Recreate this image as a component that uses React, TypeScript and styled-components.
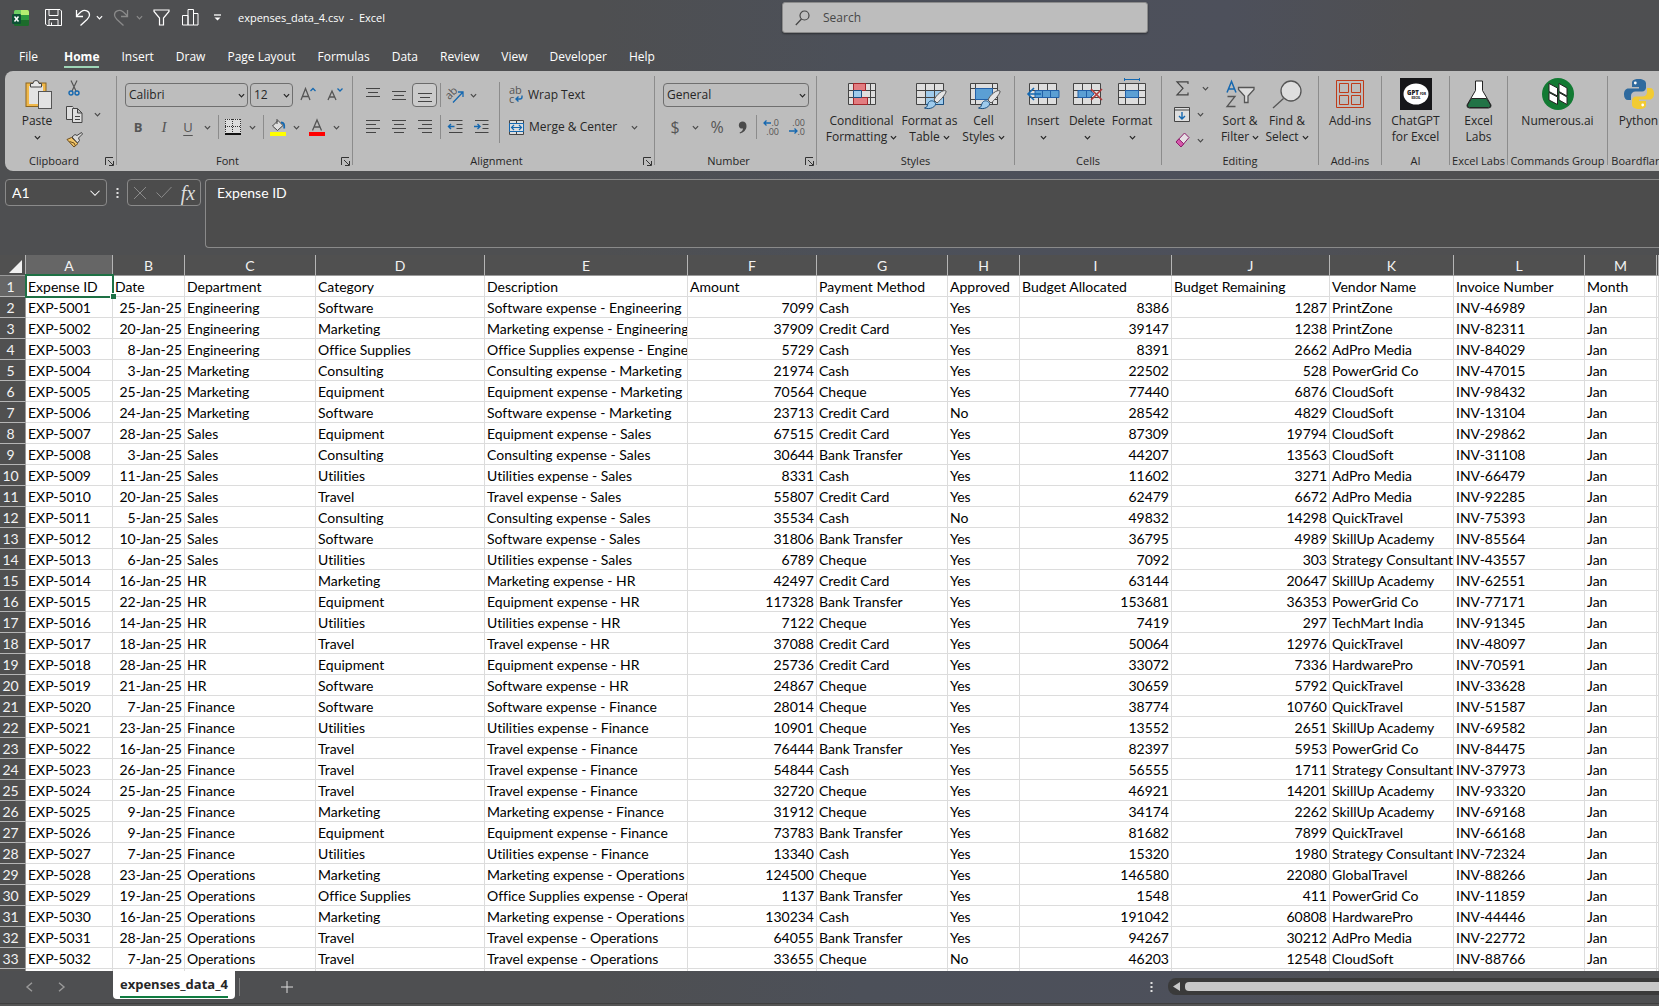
import React from "react";
import styled, { createGlobalStyle, css } from "styled-components";

const GlobalStyle = createGlobalStyle`
  *, *::before, *::after { box-sizing: border-box; }
  body { margin: 0; overflow: hidden; }
  button, input, select, textarea { font: inherit; color: inherit; }
  svg { display: block; flex: none; overflow: visible; }
`;

const ui = `"Open Sans", "Noto Sans", sans-serif`;
const sheet = `Lato, "Open Sans", sans-serif`;

/* ---------- shell ---------- */

const Shell = styled.div`
  display: flex;
  flex-direction: column;
  height: 100vh;
  overflow: hidden;
  font-family: ${ui};
  font-size: 12px;
  line-height: 16px;
  color: #fff;
  background: linear-gradient(90deg, #4e4f51 0%, #4e4f51 36%, #4c5059 52%, #4d505b 74%, #4f4f51 86%, #4e4f51 100%);
`;

const PlainButton = styled.button`
  display: flex;
  align-items: center;
  justify-content: center;
  padding: 0;
  border: 0;
  background: none;
`;

/* ---------- title bar ---------- */

const TitleBar = styled.header`
  display: grid;
  grid-template-columns: 782fr 366fr 511fr;
  align-items: start;
  height: 36px;
  padding-top: 2px;
`;

const QuickAccess = styled.div`
  display: flex;
  align-items: center;
  height: 31px;
  padding-left: 8px;
`;

const QuickButton = styled(PlainButton)<{ $w: number; $dim?: boolean }>`
  width: ${(p) => p.$w}px;
  height: 24px;
  color: ${(p) => (p.$dim ? "#8a8a8a" : "#fff")};
`;

const FileName = styled.span`
  margin-left: 4px;
  font-size: 11px;
  white-space: pre;
`;

const SearchBox = styled.label`
  display: flex;
  align-items: center;
  gap: 13px;
  height: 31px;
  padding: 0 12px;
  border: 1px solid #8b8b8b;
  border-radius: 3px;
  background: #bdbdbd;
  color: #444;
  box-shadow: 0 1px 2px rgba(0, 0, 0, 0.4);
`;

const SearchInput = styled.input`
  flex: 1;
  min-width: 0;
  padding: 0;
  border: 0;
  outline: 0;
  background: none;
  &::placeholder { color: #484848; opacity: 1; }
`;

/* ---------- tabs ---------- */

const Tabs = styled.nav`
  display: flex;
  height: 35px;
  padding: 10px 0 0 8px;
`;

const Tab = styled(PlainButton)<{ $active?: boolean }>`
  position: relative;
  height: 22px;
  padding: 0 11px;
  font-weight: ${(p) => (p.$active ? 700 : 400)};
  ${(p) => p.$active && css`
    margin: 0 0 0 4px;
    &::after {
      content: "";
      position: absolute;
      left: 11px;
      right: 11px;
      bottom: 0;
      height: 2px;
      background: #9fd5b7;
    }
  `}
`;

/* ---------- ribbon ---------- */

const RibbonBar = styled.section`
  display: flex;
  height: 100px;
  margin-left: 5px;
  padding: 5px 0 6px 1px;
  overflow: hidden;
  border-radius: 8px 0 0 8px;
  background: #bdbdbd;
  color: #262626;
  flex: none;
`;

const GroupBox = styled.div<{ $w: number }>`
  display: flex;
  flex-direction: column;
  flex: 0 0 ${(p) => p.$w}px;
  min-width: 0;
  border-right: 1px solid #8c8c8c;
`;

const GroupBody = styled.div<{ $pad?: number; $center?: boolean }>`
  display: flex;
  align-items: flex-start;
  flex: 1;
  min-height: 0;
  padding-left: ${(p) => p.$pad ?? 0}px;
  justify-content: ${(p) => (p.$center ? "center" : "flex-start")};
`;

const GroupFoot = styled.div`
  display: flex;
  align-items: center;
  height: 16px;
  margin-bottom: -4px;
  font-size: 11px;
  white-space: nowrap;
`;

const GroupName = styled.span`
  display: flex;
  flex: 1;
  min-width: 0;
  justify-content: center;
`;

const LaunchButton = styled(PlainButton)`
  width: 14px;
  height: 16px;
`;

const Stack = styled.div<{ $gap?: number; $top?: number }>`
  display: flex;
  flex-direction: column;
  gap: ${(p) => p.$gap ?? 8}px;
  padding-top: ${(p) => p.$top ?? 7}px;
`;

const Line = styled.div<{ $pad?: number; $gap?: number }>`
  display: flex;
  align-items: center;
  gap: ${(p) => p.$gap ?? 0}px;
  height: 24px;
  padding-left: ${(p) => p.$pad ?? 0}px;
`;

const Tool = styled(PlainButton)<{ $w: number; $on?: boolean }>`
  width: ${(p) => p.$w}px;
  height: 24px;
  color: #4a4a4a;
  ${(p) => p.$on && css`
    border: 1px solid #6b6b6b;
    border-radius: 4px;
    background: #cbcbcb;
  `}
`;

const Glyph = styled.span<{ $size?: number; $kind?: "b" | "i" | "u" }>`
  font-size: ${(p) => p.$size ?? 13}px;
  line-height: 20px;
  font-weight: ${(p) => (p.$kind === "b" ? 700 : 400)};
  font-style: ${(p) => (p.$kind === "i" ? "italic" : "normal")};
  font-family: ${(p) => (p.$kind === "i" ? `"Liberation Serif", serif` : ui)};
  text-decoration: ${(p) => (p.$kind === "u" ? "underline" : "none")};
  text-underline-offset: 3px;
  color: #555;
`;

const Rule = styled.span<{ $h?: number }>`
  width: 1px;
  height: ${(p) => p.$h ?? 24}px;
  margin: 0 3px;
  background: #8c8c8c;
`;

const TextTool = styled(PlainButton)`
  gap: 5px;
  height: 24px;
  white-space: nowrap;
`;

const Picker = styled.div<{ $w: number }>`
  position: relative;
  width: ${(p) => p.$w}px;
  height: 24px;
  & > svg { position: absolute; right: 3px; top: 9px; pointer-events: none; }
`;

const PickerSelect = styled.select`
  appearance: none;
  width: 100%;
  height: 24px;
  padding: 0 3px;
  border: 1px solid #6f6f6f;
  border-radius: 4px;
  background: transparent;
`;

const BigTool = styled(PlainButton)<{ $w: number }>`
  flex-direction: column;
  justify-content: flex-start;
  flex: none;
  width: ${(p) => p.$w}px;
  text-align: center;
  white-space: nowrap;
`;

const BigArt = styled.span`
  display: flex;
  align-items: center;
  justify-content: center;
  height: 37px;
  padding-bottom: 1px;
`;

const BigLabel = styled.span`
  display: flex;
  align-items: center;
  gap: 3px;
  height: 16px;
`;

/* ---------- formula bar ---------- */

const FormulaBar = styled.section`
  display: flex;
  align-items: flex-start;
  flex: none;
  height: 84px;
  padding: 8px 0 0 5px;
`;

const NameBox = styled.label`
  display: flex;
  align-items: center;
  width: 102px;
  height: 27px;
  padding: 0 5px 0 6px;
  border: 1px solid #8a8a8a;
  border-radius: 4px;
  background: #4c4c4c;
  font: 14px/18px ${sheet};
`;

const NameInput = styled.input`
  flex: 1;
  width: 0;
  padding: 0;
  border: 0;
  outline: 0;
  background: none;
`;

const Dots = styled.span`
  display: flex;
  align-items: center;
  justify-content: center;
  width: 20px;
  height: 27px;
`;

const FxBox = styled.div`
  display: flex;
  width: 74px;
  height: 27px;
  border: 1px solid #8a8a8a;
  border-radius: 4px;
  background: #4c4c4c;
`;

const FxButton = styled(PlainButton)<{ $fx?: boolean }>`
  flex: 1;
  color: #8a8a8a;
  ${(p) => p.$fx && css`
    color: #dedede;
    font: italic 20px/22px "Liberation Serif", serif;
  `}
`;

const FormulaInput = styled.textarea`
  flex: 1;
  height: 69px;
  margin-left: 4px;
  padding: 3px 11px;
  border: 1px solid #8a8a8a;
  border-right: 0;
  border-radius: 4px 0 0 4px;
  outline: 0;
  resize: none;
  background: #4c4c4c;
  color: #fff;
  font: 14px/19px ${sheet};
`;

/* ---------- grid ---------- */

const GridArea = styled.main`
  flex: 1;
  min-height: 0;
  overflow: hidden;
  background: #fff;
  color: #000;
  font: 14px/18px ${sheet};
  font-variant-ligatures: none;
`;

const Grid = styled.table`
  width: 100%;
  table-layout: fixed;
  border-collapse: separate;
  border-spacing: 0;
`;

const ColHead = styled.th<{ $on?: boolean }>`
  height: 21px;
  padding: 2px 0 0;
  border-right: 1px solid #b5b5b5;
  border-bottom: 1px solid #9a9a9a;
  background: ${(p) => (p.$on ? "#666" : "#505050")};
  color: #f2f2f2;
  font-weight: 400;
`;

const Corner = styled(ColHead)`
  & > svg { margin: 0 3px 0 auto; }
`;

const RowHead = styled.th<{ $on?: boolean }>`
  height: 21px;
  padding: 2px 4px 0 0;
  border-right: 1px solid #9a9a9a;
  border-bottom: 1px solid #b5b5b5;
  background: ${(p) => (p.$on ? "#666" : "#505050")};
  color: #f2f2f2;
  font-weight: 400;
`;

const Cell = styled.td<{ $right?: boolean; $selected?: boolean }>`
  position: relative;
  height: 21px;
  padding: 2px 2px 0;
  border-right: 1px solid #dcdcdc;
  border-bottom: 1px solid #dcdcdc;
  overflow: ${(p) => (p.$selected ? "visible" : "hidden")};
  z-index: ${(p) => (p.$selected ? 1 : 0)};
  text-align: ${(p) => (p.$right ? "right" : "left")};
  white-space: nowrap;
`;

const Selection = styled.span`
  position: absolute;
  inset: -2px -2px -2px -1px;
  border: 2px solid #1e7145;
  &::after {
    content: "";
    position: absolute;
    right: -4px;
    bottom: -3px;
    width: 6px;
    height: 6px;
    border: 1px solid #fff;
    border-width: 1px 0 0 1px;
    background: #1e7145;
  }
`;

/* ---------- sheet bar ---------- */

const SheetBar = styled.footer`
  display: flex;
  align-items: flex-start;
  flex: none;
  height: 32px;
`;

const SheetNav = styled.div`
  display: flex;
  width: 113px;
  height: 30px;
  padding-left: 13px;
  color: #9a9a9a;
`;

const SheetTab = styled(PlainButton)`
  height: 28px;
  padding: 0 7px;
  border-radius: 0 0 4px 4px;
  background: #fff;
  color: #262626;
  font-size: 13px;
  font-weight: 700;
`;

const SheetTabText = styled.span`
  height: 25px;
  padding-top: 3px;
  border-bottom: 2px solid #107c41;
`;

const SheetRule = styled.span`
  width: 1px;
  height: 18px;
  margin: 7px 31px 0 4px;
  background: #7d7d7d;
`;

const Scroller = styled.div`
  display: flex;
  align-items: center;
  gap: 5px;
  flex: 0 0 29.6%;
  height: 17px;
  margin: 7px 0 0 0;
  padding-left: 5px;
  border-radius: 8px 0 0 8px;
  background: #3a3a3a;
`;

const Thumb = styled.span`
  flex: 1;
  height: 9px;
  border-radius: 4px 0 0 4px;
  background: #c8c8c8;
`;

const Spacer = styled.span`
  flex: 1;
`;

const StatusStrip = styled.div`
  flex: none;
  height: 3px;
  border-top: 1px solid #3e3e3e;
  background: #545454;
`;

const SheetTool = styled(PlainButton)`
  width: 32px;
  height: 31px;
`;

/* ---------- icons ---------- */

const Chevron = ({ size = 7, w = 1.4 }: { size?: number; w?: number }) => (
  <svg width={size} height={size} viewBox="0 0 8 8" fill="none" stroke="currentColor" strokeWidth={w}>
    <path d="M1 2.5 4 5.5 7 2.5" />
  </svg>
);

const Launcher = () => (
  <svg width="9" height="9" viewBox="0 0 9 9" fill="none" stroke="#333">
    <path d="M.5 8V.5H8M3 3l5 5M8.500 4v4.500H4" />
  </svg>
);

const ExcelLogo = () => (
  <svg width="17" height="16" viewBox="0 0 17 16">
    <rect x="2" y="0" width="15" height="16" rx="1.500" fill="#1c6b2b" />
    <path d="M3.500 0H9v5H2V1.500A1.500 1.500 0 0 1 3.500 0z" fill="#6fd066" />
    <path d="M9 0h6.500A1.500 1.500 0 0 1 17 1.500V5H9z" fill="#b4ee70" />
    <rect x="9" y="5" width="8" height="5" fill="#2c9a3d" />
    <rect y="4" width="9" height="10" rx="1.200" fill="#0d5135" />
    <path d="M2.500 6.500 6.500 11.500M6.500 6.500 2.500 11.500" stroke="#fff" strokeWidth="1.500" />
  </svg>
);

const SaveIcon = () => (
  <svg width="17" height="17" viewBox="0 0 17 17" fill="none" stroke="currentColor">
    <path d="M.5.500h14.500l1.500 1.500v14.500H2L.5 15zM4 .5v6h9v-6M4 16.500v-6h9v6M6.500 13.500v3" />
  </svg>
);

const UndoIcon = ({ flip }: { flip?: boolean }) => (
  <svg width="16" height="18" viewBox="0 0 16 18" fill="none" stroke="currentColor" strokeWidth="1.300">
    <path transform={flip ? "matrix(-1 0 0 1 16 0)" : undefined} d="M1.500 1v6.500H8M1.500 7 6 2.800C10 0 14.500 2 14.500 6c0 2-1 3-2.500 4.500L5.500 16.500" />
  </svg>
);

const FunnelIcon = () => (
  <svg width="17" height="17" viewBox="0 0 17 17" fill="none" stroke="currentColor" strokeWidth="1.200">
    <path d="M1 1h15v1.500L10.500 9v7h-4V9L1 2.500z" />
  </svg>
);

const BarsIcon = () => (
  <svg width="17" height="17" viewBox="0 0 17 17" fill="none" stroke="currentColor">
    <path d="M.5 6.500H6v9.500H.5zM6 .5h5.500V16H6zM11.500 4.500h4.500V16h-4.500z" />
  </svg>
);

const MoreIcon = () => (
  <svg width="9" height="8" viewBox="0 0 9 8" fill="none" stroke="currentColor" strokeWidth="1.300">
    <path d="M1 1h7" /><path d="M1.500 3.500 4.500 6.500 7.500 3.500z" fill="currentColor" stroke="none" />
  </svg>
);

const SearchIcon = () => (
  <svg width="15" height="16" viewBox="0 0 15 16" fill="none" stroke="#444" strokeWidth="1.200">
    <circle cx="9.500" cy="5.500" r="4.500" /><path d="M6.500 9 .8 15" />
  </svg>
);

const PasteIcon = () => (
  <svg width="24" height="30" viewBox="0 0 24 30">
    <rect x="1" y="4" width="20" height="23.500" fill="#f0b84a" stroke="#8a6420" />
    <rect x="4" y="7" width="14" height="18" fill="#e3e3e3" />
    <path d="M5.500 8V4.500H8a3 3 0 0 1 6 0h2.500V8z" fill="#e8e8e8" stroke="#444" />
    <rect x="13.500" y="12.500" width="13" height="17" fill="#e3e3e3" stroke="#555" />
  </svg>
);

const CutIcon = () => (
  <svg width="12" height="16" viewBox="0 0 12 16" fill="none" stroke="#555" strokeWidth="1.200">
    <path d="M3 .5 8 11M9 .5 4 11" />
    <circle cx="3" cy="13" r="2" stroke="#1568b0" strokeWidth="1.400" /><circle cx="9" cy="13" r="2" stroke="#1568b0" strokeWidth="1.400" />
  </svg>
);

const CopyIcon = () => (
  <svg width="17" height="17" viewBox="0 0 17 17" fill="#dedede" stroke="#444">
    <path d="M6.500 13.500H.5V.500h6l1 1" /><path d="M6.500 2.500h5l4.500 4.500v9.500H6.500zM11.500 2.500V7H16M9 10.500h5M9 13.500h5" />
  </svg>
);

const BrushIcon = () => (
  <svg width="17" height="16" viewBox="0 0 17 16">
    <path d="M1 7.500 8 15l4-3.500L5.500 5.500z" fill="#f0c56a" stroke="#6d4c1b" />
    <path d="m6 5 3-2.500 2 1L15.500.5 16.500 2l-4 4 1 2.500L11.500 11z" fill="#d9d9d9" stroke="#444" />
    <path d="M3.500 9.500 8 11l1.500 3" fill="none" stroke="#6d4c1b" />
  </svg>
);

const FontSizeIcon = ({ down }: { down?: boolean }) => (
  <svg width="16" height="16" viewBox="0 0 16 16" fill="none" stroke="#555" strokeWidth="1.300">
    <path d={down ? "M1 13 5 4 9 13M2.500 10h5" : "M1 13 5.500 1.500 10 13M2.500 9.500h6"} />
    <path stroke="#1568b0" d={down ? "m10.500 1.500 2.500 2.500 2.500-2.500" : "m10.500 4 2.500-2.500L15.500 4"} />
  </svg>
);

const BordersIcon = () => (
  <svg width="16" height="16" viewBox="0 0 16 16" fill="none">
    <rect width="16" height="15" fill="#dcdcdc" />
    <path d="M.5 0v14M15.500 0v14M7.500 0v14M0 .5h16M0 7.500h16" stroke="#333" strokeDasharray="1 1" />
    <path d="M0 15h16" stroke="#111" strokeWidth="2" />
  </svg>
);

const FillIcon = () => (
  <svg width="16" height="17" viewBox="0 0 16 17" fill="none" stroke="#444">
    <rect y="13" width="16" height="4" fill="#ffff00" stroke="none" />
    <path d="M2.500 7 8 1.500 13 6.500 7.500 11.500z" fill="#dedede" /><path d="M7 0v5" />
    <path d="M11 3.500c3 0 3.500 2 3.200 6" stroke="#1568b0" strokeWidth="1.800" />
  </svg>
);

const FontColorIcon = () => (
  <svg width="16" height="17" viewBox="0 0 16 17" fill="none" stroke="#555" strokeWidth="1.300">
    <rect y="13" width="16" height="4" fill="#ff0000" stroke="none" />
    <path d="M3.500 11.500 8 1l4.500 10.500M5 8h6" />
  </svg>
);

const LinesIcon = ({ d }: { d: string }) => (
  <svg width="14" height="14" viewBox="0 0 14 14" fill="none" stroke="#444"><path d={d} /></svg>
);

const lines = {
  top: "M0 .5h14M2 4.500h10M0 8.500h14",
  middle: "M0 3.500h14M2 7.500h10M0 11.500h14",
  bottom: "M0 5.500h14M2 9.500h10M0 13.500h14",
  left: "M0 .5h14M0 4.500h10M0 8.500h14M0 12.500h10",
  center: "M0 .5h14M2 4.500h10M0 8.500h14M2 12.500h10",
  right: "M0 .5h14M4 4.500h10M0 8.500h14M4 12.500h10",
};

const IndentIcon = ({ right }: { right?: boolean }) => (
  <svg width="15" height="14" viewBox="0 0 15 14" fill="none" stroke="#444">
    <path d="M1 .5h13.500M8.500 4.500h6M8.500 8.500h6M1 12.500h13.500" />
    <path stroke="#1568b0" strokeWidth="1.400" d={right ? "M0 6.500h6M3.500 4 6 6.500 3.500 9" : "M.5 6.500h6M3 4 .5 6.500 3 9"} />
  </svg>
);

const SvgText = styled.text`
  font-family: ${ui};
  fill: #555;
`;

const OrientIcon = () => (
  <svg width="17" height="17" viewBox="0 0 17 17" fill="none">
    <SvgText transform="rotate(-45 5 9)" x="0" y="10" fontSize="11">ab</SvgText>
    <path d="M6 15.500 15.500 5.500M11 5h5v5" stroke="#1568b0" strokeWidth="1.300" />
  </svg>
);

const WrapIcon = () => (
  <svg width="14" height="16" viewBox="0 0 14 16" fill="none">
    <SvgText x="0" y="7" fontSize="11">ab</SvgText>
    <SvgText x="0" y="16" fontSize="11">c</SvgText>
    <path d="M13 8.500v1.500q0 2-2 2H7M9.500 9.500 7 12l2.500 2.500" stroke="#1568b0" strokeWidth="1.400" />
  </svg>
);

const MergeIcon = () => (
  <svg width="15" height="15" viewBox="0 0 15 15" fill="#dedede" stroke="#444">
    <path d="M.5.500h14v14H.5zM7.500.500v14" />
    <path d="M.5 3.500h14v8H.5z" stroke="#1568b0" />
    <path d="M2.500 7.500h10M5 5 2.500 7.500 5 10M10 5l2.500 2.500L10 10" stroke="#1568b0" fill="none" strokeWidth="1.200" />
  </svg>
);

const DecimalIcon = ({ less }: { less?: boolean }) => (
  <svg width="16" height="16" viewBox="0 0 16 16" fill="none" stroke="#1568b0" strokeWidth="1.300">
    <SvgText stroke="none" textAnchor="end" x="16" y="7" fontSize="9">{less ? ".00" : ".0"}</SvgText>
    <SvgText stroke="none" textAnchor="end" x="16" y="16" fontSize="9">{less ? ".0" : ".00"}</SvgText>
    {less ? <path d="M0 12h8M5.500 9.500 8 12l-2.500 2.500" /> : <path d="M.8 4H8M3.500 1.500 1 4l2.500 2.500" />}
  </svg>
);

const CommaIcon = () => (
  <svg width="9" height="13" viewBox="0 0 9 13"><path d="M4.500.5C7 .5 8.500 2 8.500 5c0 4-3 6.500-6.500 7.500l-.4-1C4 10.500 5 9 5 7.500 2.500 8 .8 6.500.8 4.200.8 2 2.500.5 4.500.5z" fill="#4a4a4a" /></svg>
);

const BrushOver = () => (
  <>
    <path d="M18 17C20 12 27 6 30 8c1 1.500-5 9-9 12z" fill="#e4e4e4" stroke="#555" />
    <path d="M8.500 25c3 0 2.500-3 4-5.500 2-3 6.500-1.500 7 1 .5 3-5 6.500-11 4.500z" fill="#9fcbec" stroke="#1a4f80" />
  </>
);

const CondIcon = () => (
  <svg width="28" height="22" viewBox="0 0 28 22" fill="#dedede" stroke="#444">
    <path d="M.5.500h27v21H.5zM.5 7.500h27M.5 14.500h27M5.500.500v21M22.500.500v21" />
    <path d="M5.500.500h12v7h-12zM5.500 14.500h14v7h-14z" fill="#e27c80" stroke="#a3262b" />
    <path d="M5.500 7.500h8v7h-8z" fill="#9fcbec" stroke="#1a4f80" />
  </svg>
);

const TableIcon = () => (
  <svg width="28" height="22" viewBox="0 0 28 22" fill="#dedede" stroke="#444">
    <path d="M.5.500h27v21H.5z" /><path d="M9.500 7.500h18v14h-18z" fill="#9fcbec" stroke="#1a4f80" />
    <path d="M.5 7.500h27M.5 14.500h27M9.500.500v21M18.500.500v21" fill="none" />
    <BrushOver />
  </svg>
);

const CellStyleIcon = () => (
  <svg width="28" height="22" viewBox="0 0 28 22" fill="#dedede" stroke="#444">
    <path d="M.5.500h27v21H.5zM.5 5.500h27M.5 16.500h27M5.500.500v21M22.500.500v21" />
    <path d="M5.500 5.500h17v11h-17z" fill="#5b9fd4" stroke="#2260a8" />
    <BrushOver />
  </svg>
);

const InsertIcon = () => (
  <svg width="32" height="22" viewBox="0 0 32 22" fill="#dedede" stroke="#444">
    <path d="M2.500.500h27v21h-27zM2.500 7.500h27M2.500 14.500h27M11.500.500v21M20.500.500v21" />
    <path d="M8 7.500h24v7H8zM15.500 7.500v7M23.500 7.500v7" fill="#5b9fd4" stroke="#2260a8" />
    <path d="M14 11H1.500M7 5 1 11l6 6" fill="none" stroke="#1568b0" strokeWidth="1.600" />
  </svg>
);

const DeleteIcon = () => (
  <svg width="28" height="22" viewBox="0 0 28 22" fill="#dedede" stroke="#444">
    <path d="M.5.500h27v21H.5zM.5 7.500h27M.5 14.500h27M9.500.500v21M18.500.500v21" />
    <path d="M5 7.500h12l4 3.500-4 3.500H5zM13.500 7.500v7" fill="#5b9fd4" stroke="#2260a8" />
    <path d="m18 6 11 11M29 6 18 17" stroke="#b23a3a" strokeWidth="1.600" />
  </svg>
);

const FormatIcon = () => (
  <svg width="28" height="22" viewBox="0 0 28 22" fill="#dedede" stroke="#444">
    <path d="M.5.500h27v21H.5zM.5 7.500h27M.5 14.500h27M7.500.500v21M20.500.500v21" />
    <path d="M7.500 7.500h13v7h-13z" fill="#5b9fd4" stroke="#2260a8" />
    <path d="M6.500-3.500h15M6.500-5v3M21.500-5v3" stroke="#1568b0" />
  </svg>
);

const SumIcon = () => (
  <svg width="13" height="15" viewBox="0 0 13 15" fill="none" stroke="#444" strokeWidth="1.200"><path d="M12 3V.8H1l6 6.500-6 6.500h11V11.500" /></svg>
);

const FillDownIcon = () => (
  <svg width="16" height="15" viewBox="0 0 16 15" fill="#dedede" stroke="#444">
    <path d="M.5.500h15v14H.5zM.5 3h15" /><path d="M8 5v7M5 9l3 3 3-3" fill="none" stroke="#1568b0" strokeWidth="1.400" />
  </svg>
);

const EraserIcon = () => (
  <svg width="15" height="16" viewBox="0 0 15 16" stroke="#8e1d6b">
    <path d="M1 10 9.500 1l4.500 4.500L6 15z" fill="#e6dfe4" /><path d="M1 10 3.800 7l5 4.800L6 15z" fill="#d659ab" />
  </svg>
);

const SortIcon = () => (
  <svg width="29" height="28" viewBox="0 0 29 28" fill="none" strokeWidth="1.300">
    <path d="M1 12.500 5.500 1.500 10 12.500M2.500 9h6" stroke="#1568b0" strokeWidth="1.500" />
    <path d="M1.500 16.500h7.500L1 26.500h8.500" stroke="#555" />
    <path d="M12.500 7.500h15.500v2L22 16v6.500h-3.500V16l-6-6.500z" fill="#dedede" stroke="#555" />
  </svg>
);

const FindIcon = () => (
  <svg width="30" height="29" viewBox="0 0 30 29" fill="none" stroke="#555" strokeWidth="1.300">
    <circle cx="19" cy="11" r="10" fill="#dedede" /><path d="M11.500 18.500 1 28" />
  </svg>
);

const AddinsIcon = () => (
  <svg width="28" height="28" viewBox="0 0 28 28" fill="none" stroke="#bf3b1a">
    <path d="M.5.500h27v27H.5zM3.500 3.500h9v9h-9zM15.500 3.500h9v9h-9zM3.500 15.500h9v9h-9zM15.500 15.500h9v9h-9z" />
  </svg>
);

const GptText = styled.text`
  font-family: "Open Sans", sans-serif;
  font-weight: 800;
  text-anchor: middle;
  fill: #222;
`;

const GptIcon = () => (
  <svg width="32" height="32" viewBox="0 0 32 32">
    <rect width="32" height="32" fill="#17171a" /><ellipse cx="16" cy="16" rx="12.500" ry="10.500" fill="#fff" />
    <GptText x="13" y="17" fontSize="6">GPT</GptText>
    <GptText x="23" y="17" fontSize="3">FOR</GptText>
    <GptText x="16" y="21" fontSize="3">EXCEL</GptText>
  </svg>
);

const FlaskIcon = () => (
  <svg width="26" height="29" viewBox="0 0 26 29" strokeLinejoin="round">
    <path d="M9.500 1h7v9.500L25 25q.5 3-2.500 3h-19Q.5 28 1 25l8.500-14.500z" fill="#fff" stroke="#222" />
    <path d="M5.500 18.500h15L24.500 25q.5 2.500-2 2.500h-19q-2.500 0-2-2.500z" fill="#217346" stroke="#222" />
  </svg>
);

const NumerousIcon = () => (
  <svg width="32" height="32" viewBox="0 0 32 32">
    <circle cx="16" cy="16" r="16" fill="#127a33" />
    <path d="M7 5.500 15.500 10v8L7 13.500zM7 14.500l8.500 4.500v7.500L7 22zM17 5.500l8 4.500v8l-8-4.500zM17 14.500l8 4.500v7.500l-8-4.500z" fill="#fff" stroke="#222" />
  </svg>
);

const PythonIcon = () => (
  <svg width="32" height="32" viewBox="0 0 32 32">
    <path d="M15.800 1C9 1 9 3.500 9 5.500V9h7v1.500H5.500C2.500 10.500 1 13 1 16.500S2.500 22 5 22h3v-4c0-3 2-4.500 4.500-4.500H19c2.500 0 4-2 4-4v-4C23 2.500 20 1 15.800 1z" fill="#2f6a9e" />
    <path d="M16.200 31c6.800 0 6.800-2.500 6.800-4.500V23h-7v-1.500h10.500c3 0 4.500-2.500 4.500-6S29.500 10 27 10h-3v4c0 3-2 4.500-4.500 4.500H13c-2.500 0-4 2-4 4v4c0 3 3 4.500 7.200 4.500z" fill="#f2cb33" />
    <circle cx="12.300" cy="5" r="1.400" fill="#fff" /><circle cx="19.700" cy="27" r="1.400" fill="#fff" />
  </svg>
);

const CancelIcon = () => (
  <svg width="14" height="14" viewBox="0 0 14 14" fill="none" stroke="currentColor"><path d="m1 1 12 12M13 1 1 13" /></svg>
);
const CheckIcon = () => (
  <svg width="16" height="13" viewBox="0 0 16 13" fill="none" stroke="currentColor"><path d="m.5 6.500 5 5L15.500 1" /></svg>
);
const DotsIcon = () => (
  <svg width="3" height="12" viewBox="0 0 3 12" fill="#e0e0e0"><path d="M.5 1h2v2h-2zM.5 5h2v2h-2zM.5 9h2v2h-2z" /></svg>
);
const ArrowIcon = ({ right }: { right?: boolean }) => (
  <svg width="7" height="10" viewBox="0 0 7 10" fill="none" stroke="currentColor" strokeWidth="1.400">
    <path d={right ? "m1 .8 5 4.200-5 4.200" : "M6 .8 1 5l5 4.200"} />
  </svg>
);

/* ---------- data ---------- */

const headers = ["Expense ID", "Date", "Department", "Category", "Description", "Amount", "Payment Method", "Approved", "Budget Allocated", "Budget Remaining", "Vendor Name", "Invoice Number", "Month"];
const widths = [87, 72, 131, 169, 203, 129, 131, 72, 152, 158, 124, 131, 72];
const numeric = [1, 5, 8, 9];

type Expense = [date: number, dept: string, category: string, amount: number, pay: string, ok: string, budget: number, vendor: string, invoice: number];

const expenses: Expense[] = [
  [25, "Engineering", "Software", 7099, "Cash", "Yes", 8386, "PrintZone", 46989],
  [20, "Engineering", "Marketing", 37909, "Credit Card", "Yes", 39147, "PrintZone", 82311],
  [8, "Engineering", "Office Supplies", 5729, "Cash", "Yes", 8391, "AdPro Media", 84029],
  [3, "Marketing", "Consulting", 21974, "Cash", "Yes", 22502, "PowerGrid Co", 47015],
  [25, "Marketing", "Equipment", 70564, "Cheque", "Yes", 77440, "CloudSoft", 98432],
  [24, "Marketing", "Software", 23713, "Credit Card", "No", 28542, "CloudSoft", 13104],
  [28, "Sales", "Equipment", 67515, "Credit Card", "Yes", 87309, "CloudSoft", 29862],
  [3, "Sales", "Consulting", 30644, "Bank Transfer", "Yes", 44207, "CloudSoft", 31108],
  [11, "Sales", "Utilities", 8331, "Cash", "Yes", 11602, "AdPro Media", 66479],
  [20, "Sales", "Travel", 55807, "Credit Card", "Yes", 62479, "AdPro Media", 92285],
  [5, "Sales", "Consulting", 35534, "Cash", "No", 49832, "QuickTravel", 75393],
  [10, "Sales", "Software", 31806, "Bank Transfer", "Yes", 36795, "SkillUp Academy", 85564],
  [6, "Sales", "Utilities", 6789, "Cheque", "Yes", 7092, "Strategy Consultants", 43557],
  [16, "HR", "Marketing", 42497, "Credit Card", "Yes", 63144, "SkillUp Academy", 62551],
  [22, "HR", "Equipment", 117328, "Bank Transfer", "Yes", 153681, "PowerGrid Co", 77171],
  [14, "HR", "Utilities", 7122, "Cheque", "Yes", 7419, "TechMart India", 91345],
  [18, "HR", "Travel", 37088, "Credit Card", "Yes", 50064, "QuickTravel", 48097],
  [28, "HR", "Equipment", 25736, "Credit Card", "Yes", 33072, "HardwarePro", 70591],
  [21, "HR", "Software", 24867, "Cheque", "Yes", 30659, "QuickTravel", 33628],
  [7, "Finance", "Software", 28014, "Cheque", "Yes", 38774, "QuickTravel", 51587],
  [23, "Finance", "Utilities", 10901, "Cheque", "Yes", 13552, "SkillUp Academy", 69582],
  [16, "Finance", "Travel", 76444, "Bank Transfer", "Yes", 82397, "PowerGrid Co", 84475],
  [26, "Finance", "Travel", 54844, "Cash", "Yes", 56555, "Strategy Consultants", 37973],
  [25, "Finance", "Travel", 32720, "Cheque", "Yes", 46921, "SkillUp Academy", 93320],
  [9, "Finance", "Marketing", 31912, "Cheque", "Yes", 34174, "SkillUp Academy", 69168],
  [9, "Finance", "Equipment", 73783, "Bank Transfer", "Yes", 81682, "QuickTravel", 66168],
  [7, "Finance", "Utilities", 13340, "Cash", "Yes", 15320, "Strategy Consultants", 72324],
  [23, "Operations", "Marketing", 124500, "Cheque", "Yes", 146580, "GlobalTravel", 88266],
  [19, "Operations", "Office Supplies", 1137, "Bank Transfer", "Yes", 1548, "PowerGrid Co", 11859],
  [16, "Operations", "Marketing", 130234, "Cash", "Yes", 191042, "HardwarePro", 44446],
  [28, "Operations", "Travel", 64055, "Bank Transfer", "Yes", 94267, "AdPro Media", 22772],
  [7, "Operations", "Travel", 33655, "Cheque", "No", 46203, "CloudSoft", 88766],
];

const rows = expenses.map(([date, dept, category, amount, pay, ok, budget, vendor, invoice], i) => [
  `EXP-${5001 + i}`, `${date}-Jan-25`, dept, category, `${category} expense - ${dept}`, amount, pay, ok, budget, budget - amount, vendor, `INV-${invoice}`, "Jan",
]);

const tabs = ["File", "Home", "Insert", "Draw", "Page Layout", "Formulas", "Data", "Review", "View", "Developer", "Help"];

/* ---------- composed parts ---------- */

const Group = ({ name, w, launch, children, pad, center }: { name: string; w: number; launch?: boolean; pad?: number; center?: boolean; children: React.ReactNode }) => (
  <GroupBox $w={w}>
    <GroupBody $pad={pad} $center={center}>{children}</GroupBody>
    <GroupFoot>
      <GroupName>{name}</GroupName>
      {launch && <LaunchButton aria-label={`${name} settings`}><Launcher /></LaunchButton>}
    </GroupFoot>
  </GroupBox>
);

const Big = ({ w, art, label, second, drop }: { w: number; art: React.ReactNode; label: string; second?: string; drop?: boolean }) => (
  <BigTool $w={w}>
    <BigArt>{art}</BigArt>
    <BigLabel>{label}</BigLabel>
    {(second || drop) && <BigLabel>{second}{drop && <Chevron />}</BigLabel>}
  </BigTool>
);

const Pick = ({ w, label, value }: { w: number; label: string; value: string }) => (
  <Picker $w={w}>
    <PickerSelect aria-label={label} defaultValue={value}><option>{value}</option></PickerSelect>
    <Chevron />
  </Picker>
);

const Drop = ({ w = 16, label }: { w?: number; label: string }) => <Tool $w={w} aria-label={`${label} options`}><Chevron /></Tool>;

const Ribbon = () => (
  <RibbonBar>
    <Group name="Clipboard" w={111} launch>
      <Big w={62} art={<PasteIcon />} label="Paste" drop />
      <Stack $gap={2} $top={0}>
        <Line><Tool $w={12} aria-label="Cut"><CutIcon /></Tool></Line>
        <Line><Tool $w={12} aria-label="Copy"><CopyIcon /></Tool><Drop w={34} label="Copy" /></Line>
        <Line><Tool $w={12} aria-label="Format Painter"><BrushIcon /></Tool></Line>
      </Stack>
    </Group>
    <Group name="Font" w={236} launch pad={8}>
      <Stack>
        <Line $gap={2}>
          <Pick w={123} label="Font" value="Calibri" />
          <Pick w={43} label="Font size" value="12" />
          <Tool $w={26} aria-label="Increase font size"><FontSizeIcon /></Tool>
          <Tool $w={24} aria-label="Decrease font size"><FontSizeIcon down /></Tool>
        </Line>
        <Line>
          <Tool $w={26}><Glyph $kind="b">B</Glyph></Tool>
          <Tool $w={26}><Glyph $kind="i" $size={15}>I</Glyph></Tool>
          <Tool $w={22}><Glyph $kind="u">U</Glyph></Tool>
          <Drop label="Underline" />
          <Rule />
          <Tool $w={22} aria-label="Borders"><BordersIcon /></Tool>
          <Drop label="Borders" />
          <Rule />
          <Tool $w={22} aria-label="Fill color"><FillIcon /></Tool>
          <Drop w={14} label="Fill color" />
          <Tool $w={28} aria-label="Font color"><FontColorIcon /></Tool>
          <Drop w={10} label="Font color" />
        </Line>
      </Stack>
    </Group>
    <Group name="Alignment" w={302} launch pad={7}>
      <Stack>
        <Line>
          <Tool $w={26} aria-label="Top align"><LinesIcon d={lines.top} /></Tool>
          <Tool $w={26} aria-label="Middle align"><LinesIcon d={lines.middle} /></Tool>
          <Tool $w={25} $on aria-label="Bottom align"><LinesIcon d={lines.bottom} /></Tool>
          <Rule />
          <Tool $w={22} aria-label="Orientation"><OrientIcon /></Tool>
          <Drop w={14} label="Orientation" />
        </Line>
        <Line>
          <Tool $w={26} aria-label="Align left"><LinesIcon d={lines.left} /></Tool>
          <Tool $w={26} aria-label="Center"><LinesIcon d={lines.center} /></Tool>
          <Tool $w={25} aria-label="Align right"><LinesIcon d={lines.right} /></Tool>
          <Rule />
          <Tool $w={22} aria-label="Decrease indent"><IndentIcon /></Tool>
          <Tool $w={30} aria-label="Increase indent"><IndentIcon right /></Tool>
        </Line>
      </Stack>
      <Stack $top={6}><Rule $h={61} /></Stack>
      <Stack>
        <Line $pad={6}><TextTool><WrapIcon />Wrap Text</TextTool></Line>
        <Line $pad={6}><TextTool><MergeIcon />Merge &amp; Center</TextTool><Drop w={34} label="Merge" /></Line>
      </Stack>
    </Group>
    <Group name="Number" w={162} launch pad={8}>
      <Stack>
        <Line><Pick w={146} label="Number format" value="General" /></Line>
        <Line>
          <Tool $w={24}><Glyph $size={16}>$</Glyph></Tool>
          <Drop label="Currency" />
          <Tool $w={28}><Glyph $size={16}>%</Glyph></Tool>
          <Tool $w={22} aria-label="Comma style"><CommaIcon /></Tool>
          <Rule />
          <Tool $w={22} aria-label="Increase decimal"><DecimalIcon /></Tool>
          <Tool $w={30} aria-label="Decrease decimal"><DecimalIcon less /></Tool>
        </Line>
      </Stack>
    </Group>
    <Group name="Styles" w={198} center>
      <Big w={74} art={<CondIcon />} label="Conditional" second="Formatting" drop />
      <Big w={62} art={<TableIcon />} label="Format as" second="Table" drop />
      <Big w={46} art={<CellStyleIcon />} label="Cell" second="Styles" drop />
    </Group>
    <Group name="Cells" w={147} center>
      <Big w={44} art={<InsertIcon />} label="Insert" drop />
      <Big w={44} art={<DeleteIcon />} label="Delete" drop />
      <Big w={46} art={<FormatIcon />} label="Format" drop />
    </Group>
    <Group name="Editing" w={157} pad={9}>
      <Stack $gap={2} $top={0}>
        <Line><Tool $w={22} aria-label="AutoSum"><SumIcon /></Tool><Drop w={24} label="AutoSum" /></Line>
        <Line><Tool $w={22} aria-label="Fill"><FillDownIcon /></Tool><Drop w={14} label="Fill" /></Line>
        <Line><Tool $w={22} aria-label="Clear"><EraserIcon /></Tool><Drop w={14} label="Clear" /></Line>
      </Stack>
      <Big w={46} art={<SortIcon />} label="Sort &" second="Filter" drop />
      <Big w={48} art={<FindIcon />} label="Find &" second="Select" drop />
    </Group>
    <Group name="Add-ins" w={63} center><Big w={62} art={<AddinsIcon />} label="Add-ins" /></Group>
    <Group name="AI" w={68} center><Big w={66} art={<GptIcon />} label="ChatGPT" second="for Excel" /></Group>
    <Group name="Excel Labs" w={58} center><Big w={56} art={<FlaskIcon />} label="Excel" second="Labs" /></Group>
    <Group name="Commands Group" w={100} center><Big w={98} art={<NumerousIcon />} label="Numerous.ai" /></Group>
    <Group name="Boardflare" w={62} center><Big w={60} art={<PythonIcon />} label="Python" /></Group>
  </RibbonBar>
);

export default function App() {
  return (
    <>
      <GlobalStyle />
      <Shell>
        <TitleBar>
          <QuickAccess>
            <QuickButton $w={24} aria-label="Excel"><ExcelLogo /></QuickButton>
            <QuickButton $w={42} aria-label="Save"><SaveIcon /></QuickButton>
            <QuickButton $w={18} aria-label="Undo"><UndoIcon /></QuickButton>
            <QuickButton $w={14} aria-label="Undo options"><Chevron /></QuickButton>
            <QuickButton $w={30} $dim aria-label="Redo"><UndoIcon flip /></QuickButton>
            <QuickButton $w={6} $dim aria-label="Redo options"><Chevron /></QuickButton>
            <QuickButton $w={38} aria-label="Filter"><FunnelIcon /></QuickButton>
            <QuickButton $w={20} aria-label="Chart"><BarsIcon /></QuickButton>
            <QuickButton $w={34} aria-label="Customize toolbar"><MoreIcon /></QuickButton>
            <FileName>{"expenses_data_4.csv  -  Excel"}</FileName>
          </QuickAccess>
          <SearchBox><SearchIcon /><SearchInput aria-label="Search" placeholder="Search" /></SearchBox>
        </TitleBar>
        <Tabs>{tabs.map((t) => <Tab key={t} $active={t === "Home"}>{t}</Tab>)}</Tabs>
        <Ribbon />
        <FormulaBar>
          <NameBox><NameInput aria-label="Name box" defaultValue="A1" /><Chevron size={12} w={0.7} /></NameBox>
          <Dots><DotsIcon /></Dots>
          <FxBox>
            <FxButton aria-label="Cancel"><CancelIcon /></FxButton>
            <FxButton aria-label="Enter"><CheckIcon /></FxButton>
            <FxButton $fx>fx</FxButton>
          </FxBox>
          <FormulaInput aria-label="Formula" defaultValue="Expense ID" />
        </FormulaBar>
        <GridArea>
          <Grid>
            <colgroup>
              <col width={26} />
              {widths.map((w, i) => <col key={i} width={w} />)}
              <col />
            </colgroup>
            <thead>
              <tr>
                <Corner aria-label="Select all"><svg width="13" height="13" viewBox="0 0 13 13"><path d="M13 0v13H0z" fill="#f0f0f0" /></svg></Corner>
                {headers.map((_, i) => <ColHead key={i} scope="col" $on={i === 0}>{String.fromCharCode(65 + i)}</ColHead>)}
                <ColHead />
              </tr>
            </thead>
            <tbody>
              {[headers, ...rows, headers.map(() => "")].map((row, r) => (
                <tr key={r}>
                  <RowHead scope="row" $on={r === 0}>{r < 33 ? r + 1 : ""}</RowHead>
                  {row.map((v, c) => (
                    <Cell key={c} $right={r > 0 && numeric.includes(c)} $selected={r === 0 && c === 0}>
                      {v}{r === 0 && c === 0 && <Selection />}
                    </Cell>
                  ))}
                  <Cell />
                </tr>
              ))}
            </tbody>
          </Grid>
        </GridArea>
        <SheetBar>
          <SheetNav>
            <SheetTool aria-label="Previous sheet"><ArrowIcon /></SheetTool>
            <SheetTool aria-label="Next sheet"><ArrowIcon right /></SheetTool>
          </SheetNav>
          <SheetTab><SheetTabText>expenses_data_4</SheetTabText></SheetTab>
          <SheetRule />
          <SheetTool aria-label="New sheet"><svg width="12" height="12" viewBox="0 0 12 12" stroke="#ddd"><path d="M6 0v12M0 6h12" /></svg></SheetTool>
          <Spacer />
          <SheetTool aria-label="Resize"><DotsIcon /></SheetTool>
          <Scroller>
            <svg width="7" height="9" viewBox="0 0 7 9"><path d="M7 0v9L0 4.500z" fill="#c8c8c8" /></svg>
            <Thumb />
          </Scroller>
        </SheetBar>
        <StatusStrip />
      </Shell>
    </>
  );
}
